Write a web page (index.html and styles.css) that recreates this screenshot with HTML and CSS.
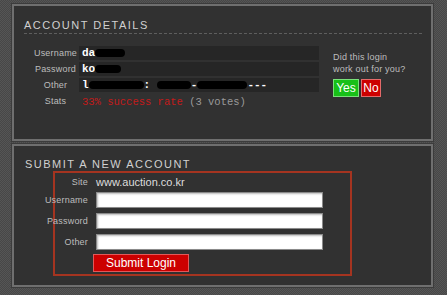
FILE: index.html
```html
<!DOCTYPE html>
<html lang="en">
<head>
  <meta charset="UTF-8" />
  <title>Account Details</title>
  <link rel="stylesheet" href="styles.css">
</head>
<body>
  <section class="panel details">
    <h2 class="title">ACCOUNT DETAILS</h2>
    <div class="details-body">
      <div class="creds">
        <span class="lbl">Username</span>
        <span class="val">da<i class="blot b-user"></i></span>
        <span class="lbl">Password</span>
        <span class="val">ko<i class="blot b-pass"></i></span>
        <span class="lbl">Other</span>
        <span class="val">l<i class="blot b-o1"></i>: <i class="blot b-o2"></i>-<i class="blot b-o3"></i>---</span>
        <span class="lbl">Stats</span>
        <span class="stats"><span class="rate">33% success rate</span> (3 votes)</span>
      </div>
      <div class="vote">
        <p>Did this login<br>work out for you?</p>
        <div class="vote-btns">
          <button class="yes">Yes</button>
          <button class="no">No</button>
        </div>
      </div>
    </div>
  </section>

  <section class="panel submit">
    <h2 class="title">SUBMIT A NEW ACCOUNT</h2>
    <form class="submit-box">
      <div class="row site-row"><label>Site</label><span class="site">www.auction.co.kr</span></div>
      <div class="row"><label>Username</label><input type="text"></div>
      <div class="row"><label>Password</label><input type="password"></div>
      <div class="row"><label>Other</label><input type="text"></div>
      <div class="row btn-row"><button type="button" class="send">Submit Login</button></div>
    </form>
  </section>
</body>
</html>
```

FILE: styles.css
```css
:root {
  --panel: #313131;
  --frame: #6f6f6f;
  --label: #bdbdbd;
  --red: #cc0000;
}
* { margin: 0; padding: 0; box-sizing: border-box; }
body {
  width: 447px; height: 295px; overflow: hidden;
  padding: 4px 14px 0 12px;
  font-family: "Liberation Sans", Arial, sans-serif;
  background: repeating-conic-gradient(#474747 0 25%, #555 0 50%) 0 0 / 2px 2px;
  color: var(--label);
}
.panel { background: var(--panel); border: 2px solid var(--frame); box-shadow: 0 0 0 1px #3c3c3c; }
.panel + .panel { margin-top: 3px; }
.title { font-weight: normal; font-size: 11px; letter-spacing: 1.5px; color: #d0d0d0; line-height: 12px; }

/* account details */
.details { height: 137px; padding: 13px 0 0 10px; }
.details .title { padding-bottom: 2px; margin-right: 9px; border-bottom: 1px dashed #5e5e5e; }
.details-body { display: flex; margin-top: 12px; }
.creds { display: grid; grid-template-columns: 45px 240px; grid-auto-rows: 14px; row-gap: 2px; column-gap: 1px; margin-left: 9px; }
.lbl { font-size: 9px; letter-spacing: 0.2px; text-align: center; line-height: 14px; color: var(--label); }
.val { background: #262626; font: bold 11px/14px "Liberation Mono", monospace; color: #fff; padding-left: 3px; white-space: nowrap; overflow: hidden; }
.blot { display: inline-block; height: 8px; background: #000; border-radius: 4px; vertical-align: -1px; }
.b-user { width: 30px; }
.b-pass { width: 26px; }
.b-o1 { width: 55px; }
.b-o2 { width: 34px; }
.b-o3 { width: 50px; }
.stats { font: 10.5px/16px "Liberation Mono", monospace; color: #999; padding-left: 3px; white-space: nowrap; }
.rate { color: #c41a1a; }
.vote { margin: 5px 0 0 14px; }
.vote p { font-size: 9px; letter-spacing: 0.2px; line-height: 12px; color: var(--label); }
.vote-btns { display: flex; gap: 2px; margin-top: 4px; }
.vote button { height: 18px; font: 12px/16px "Liberation Sans", Arial, sans-serif; color: #fff; cursor: pointer; }
.yes { width: 26px; background: #18c018; border: 1px solid #7ae07a; }
.no { width: 20px; background: var(--red); border: 1px solid #e46a6a; }

/* submit */
.submit { height: 143px; padding: 12px 0 0 11px; }
.submit-box { margin: 1px 0 0 28px; width: 299px; height: 105px; border: 2px solid #a53420; padding: 2px 0 0 0; }
.row { display: flex; align-items: center; height: 16px; margin-bottom: 5px; }
.row label { width: 33px; display: flex; justify-content: flex-end; white-space: nowrap; font-size: 9px; letter-spacing: 0.2px; color: var(--label); margin-right: 8px; }
.site-row { height: 14px; margin-bottom: 3px; }
.site { font-size: 11px; color: #ddd; }
.row input { width: 227px; height: 16px; border: 1px solid #8a8a8a; background: #fff; box-shadow: inset 1px 1px 2px #bbb; }
.btn-row { height: 18px; margin: -1px 0 0 38px; }
.send { width: 96px; height: 18px; background: var(--red); border: 1px solid #e05a5a; color: #fff; font: 12px/16px "Liberation Sans", Arial, sans-serif; cursor: pointer; }
```
